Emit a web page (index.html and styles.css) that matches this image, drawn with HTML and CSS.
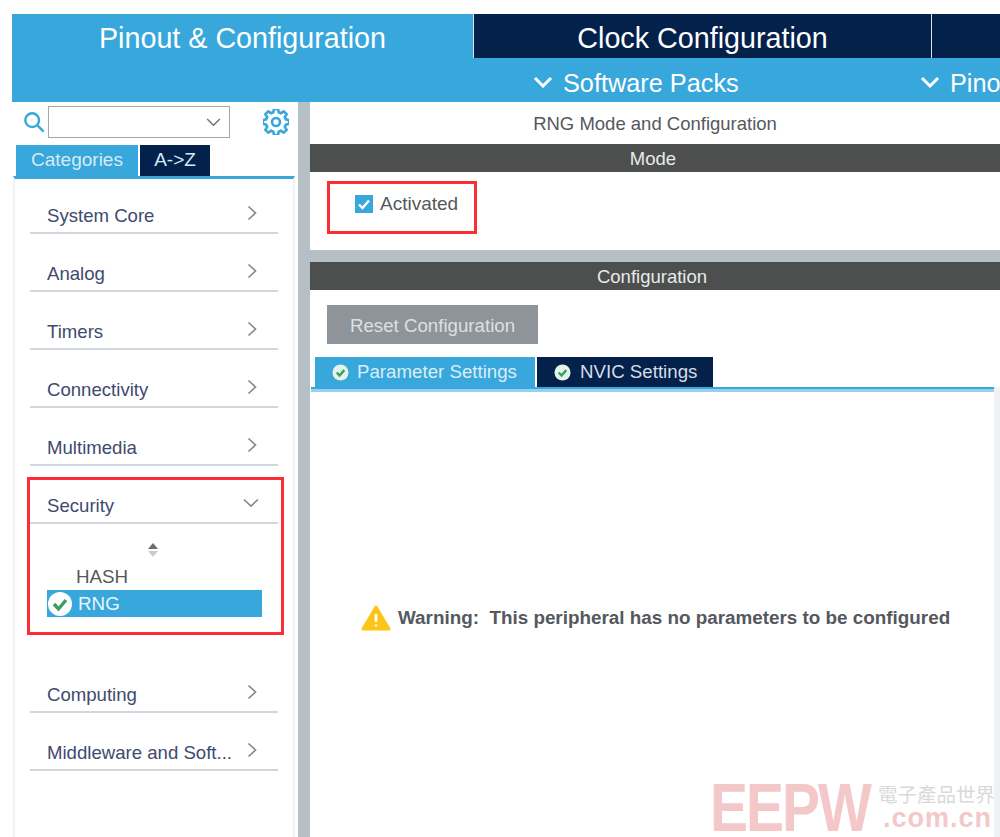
FILE: index.html
```html
<!DOCTYPE html>
<html lang="en">
<head>
<meta charset="utf-8">
<title>RNG Mode and Configuration</title>
<link rel="stylesheet" href="styles.css">
</head>
<body>
<div class="app">
  <header class="header">
    <nav class="main-tabs">
      <div class="main-tab active">Pinout &amp; Configuration</div>
      <div class="main-tab clock">Clock Configuration</div>
      <div class="main-tab rest"></div>
    </nav>
    <div class="subbar">
      <div class="sub-item packs"><svg class="sub-chev" viewBox="0 0 20 12"><path d="M2 2l8 8 8-8"/></svg>Software Packs</div>
      <div class="sub-item pinout"><svg class="sub-chev" viewBox="0 0 20 12"><path d="M2 2l8 8 8-8"/></svg>Pinout</div>
    </div>
  </header>
  <div class="workspace">
    <aside class="sidebar">
      <div class="search-row">
        <svg class="search-icon" viewBox="0 0 24 24"><circle cx="10" cy="10" r="7.5"/><path d="M15.5 15.5l7 7"/></svg>
        <div class="combo"><svg class="combo-chev" viewBox="0 0 16 10"><path d="M1 1l7 7 7-7"/></svg></div>
        <svg class="gear" viewBox="0 0 26 26"><path d="M11 1.5h4l.7 3.2 2.3 1 2.8-1.8 2.8 2.8-1.8 2.8 1 2.3 3.2.7v4l-3.2.7-1 2.3 1.8 2.8-2.8 2.8-2.8-1.8-2.3 1-.7 3.2h-4l-.7-3.2-2.3-1-2.8 1.8-2.8-2.8 1.8-2.8-1-2.3-3.2-.7v-4l3.2-.7 1-2.3-1.8-2.8 2.8-2.8 2.8 1.8 2.3-1z" transform="translate(0 -1.5)"/><circle cx="13" cy="13" r="4"/></svg>
      </div>
      <div class="side-tabs">
        <div class="side-tab on">Categories</div>
        <div class="side-tab off">A-&gt;Z</div>
      </div>
      <div class="cat-panel">
        <div class="cat-row first"><span>System Core</span><svg class="chev" viewBox="0 0 10 16"><path d="M1.5 1.5l7 6.5-7 6.5"/></svg></div>
        <div class="cat-row"><span>Analog</span><svg class="chev" viewBox="0 0 10 16"><path d="M1.5 1.5l7 6.5-7 6.5"/></svg></div>
        <div class="cat-row"><span>Timers</span><svg class="chev" viewBox="0 0 10 16"><path d="M1.5 1.5l7 6.5-7 6.5"/></svg></div>
        <div class="cat-row"><span>Connectivity</span><svg class="chev" viewBox="0 0 10 16"><path d="M1.5 1.5l7 6.5-7 6.5"/></svg></div>
        <div class="cat-row"><span>Multimedia</span><svg class="chev" viewBox="0 0 10 16"><path d="M1.5 1.5l7 6.5-7 6.5"/></svg></div>
        <div class="cat-group">
          <div class="cat-row"><span>Security</span><svg class="chev-down" viewBox="0 0 16 10"><path d="M1 1.5l7 6.5 7-6.5"/></svg></div>
          <div class="sort-mark"><svg viewBox="0 0 12 16"><path class="up" d="M6 1l5 6H1z"/><path class="down" d="M1 9h10l-5 6z"/></svg></div>
          <div class="ip-item">HASH</div>
          <div class="ip-item selected"><svg class="ok-big" viewBox="0 0 24 24"><circle cx="12" cy="12" r="12"/><path d="M6 12l4.5 5L18 8"/></svg>RNG</div>
          <div class="annot annot-security"></div>
        </div>
        <div class="cat-row computing"><span>Computing</span><svg class="chev" viewBox="0 0 10 16"><path d="M1.5 1.5l7 6.5-7 6.5"/></svg></div>
        <div class="cat-row"><span>Middleware and Soft...</span><svg class="chev" viewBox="0 0 10 16"><path d="M1.5 1.5l7 6.5-7 6.5"/></svg></div>
      </div>
    </aside>
    <div class="splitter"></div>
    <main class="content">
      <section class="mode">
        <div class="title">RNG Mode and Configuration</div>
        <div class="band band-mode">Mode</div>
        <div class="mode-body">
          <label class="check"><svg class="checkbox" viewBox="0 0 18 18"><rect width="18" height="18"/><path d="M4 9.5l3.5 3.5L14 5.5"/></svg>Activated</label>
          <div class="annot annot-mode"></div>
        </div>
      </section>
      <section class="config">
        <div class="band band-config">Configuration</div>
        <div class="reset">Reset Configuration</div>
        <div class="cfg-tabs">
          <div class="cfg-tab on"><svg class="ok" viewBox="0 0 18 18"><circle cx="9" cy="9" r="8.5"/><path d="M5 9l3 3.2L13 6.5"/></svg>Parameter Settings</div>
          <div class="cfg-tab off"><svg class="ok" viewBox="0 0 18 18"><circle cx="9" cy="9" r="8.5"/><path d="M5 9l3 3.2L13 6.5"/></svg>NVIC Settings</div>
        </div>
        <div class="cfg-body">
          <div class="cfg-line"></div>
          <div class="warning">
            <svg class="warn-icon" viewBox="0 0 30 26"><path class="tri" d="M15 2L28 24H2z"/><path class="bang" d="M15 9v8M15 19.5v2"/></svg>
            <span>Warning:&nbsp; This peripheral has no parameters to be configured</span>
          </div>
        </div>
      </section>
    </main>
  </div>
  <div class="watermark">
    <span class="wm-logo">EEPW</span>
    <div class="wm-side">
      <span class="wm-cn">電子產品世界</span>
      <span class="wm-com">.com.cn</span>
    </div>
  </div>
</div>
</body>
</html>
```
FILE: styles.css
```css
* { box-sizing: border-box; }
html, body { margin: 0; height: 100%; background: #fff; overflow: hidden; }
body { font-family: "Liberation Sans", Arial, sans-serif; color: #4d4f55; }
.app { position: relative; width: 1000px; height: 837px; padding: 14px 0 0 12px; display: flex; flex-direction: column; overflow: hidden; }

.header { height: 88px; background: #38a7db; flex: none; }
.main-tabs { display: flex; height: 44px; }
.main-tab { font-size: 28.7px; color: #fff; text-align: center; line-height: 48px; white-space: nowrap; }
.main-tab.active { width: 461px; }
.main-tab.clock { width: 459px; background: #03214a; border-left: 1px solid #d7e3ea; border-right: 1px solid #d7e3ea; }
.main-tab.rest { flex: 1; background: #03214a; }
.subbar { height: 44px; display: flex; color: #fff; font-size: 25.3px; }
.sub-item { display: flex; align-items: center; gap: 10px; height: 50px; white-space: nowrap; flex: none; }
.packs { margin-left: 521px; width: 387px; }
.sub-chev { width: 20px; height: 12px; fill: none; stroke: #fff; stroke-width: 3; margin-top: -2px; }

.workspace { flex: 1; display: flex; min-height: 0; }
.sidebar { width: 286px; flex: none; display: flex; flex-direction: column; }
.search-row { height: 43px; display: flex; align-items: center; padding: 0 0 3px 11px; flex: none; }
.search-icon { width: 22px; height: 22px; fill: none; stroke: #38a7db; stroke-width: 2.6; flex: none; }
.combo { width: 182px; height: 32px; margin-left: 3px; border: 1px solid #a4a8ab; display: flex; align-items: center; justify-content: flex-end; padding-right: 8px; flex: none; }
.combo-chev { width: 15px; height: 9px; fill: none; stroke: #6c7075; stroke-width: 1.5; }
.gear { width: 26px; height: 26px; margin-left: 33px; fill: none; stroke: #38a7db; stroke-width: 2.6; flex: none; }
.side-tabs { display: flex; height: 31px; padding-left: 4px; flex: none; }
.side-tab { font-size: 19px; color: #d6ebf7; text-align: center; line-height: 30px; }
.side-tab.on { width: 122px; background: #38a7db; }
.side-tab.off { width: 70px; margin-left: 2px; background: #03214a; }
.cat-panel { flex: 1; margin: 0 3px 0 1px; border-top: 3px solid #38a7db; border-left: 2px solid #f0f2f5; border-right: 2px solid #f0f2f5; padding: 0 15px; }
.cat-row { height: 58px; border-bottom: 2px solid #d0d6de; display: flex; align-items: flex-end; justify-content: space-between; padding: 0 21px 4px 17px; font-size: 18.6px; color: #3e4a6e; line-height: 24px; }
.cat-row.first { height: 55px; }
.chev { width: 10px; height: 16px; fill: none; stroke: #85898d; stroke-width: 1.7; margin-bottom: 7px; }
.chev-down { width: 16px; height: 10px; fill: none; stroke: #85898d; stroke-width: 1.7; margin: 0 -2px 10px 0; }
.cat-group { position: relative; height: 169px; }
.sort-mark { height: 39px; display: flex; justify-content: center; align-items: flex-end; }
.sort-mark svg { width: 12px; height: 16px; margin-right: 3px; margin-bottom: 5px; }
.sort-mark .up { fill: #6a6e72; }
.sort-mark .down { fill: #c9cccf; }
.ip-item { height: 27px; line-height: 28px; padding-left: 46px; font-size: 18.8px; color: #55595e; }
.ip-item.selected { background: #38a7db; color: #eaf6fc; margin: 0 16px 0 17px; padding-left: 31px; display: flex; align-items: center; position: relative; }
.ok-big { position: absolute; left: 1px; top: 2px; width: 24px; height: 24px; }
.ok-big circle { fill: #fff; }
.ok-big path { fill: none; stroke: #3b9e63; stroke-width: 3.4; }
.computing { height: 78px; }

.annot { position: absolute; border: 3px solid #fb2e36; pointer-events: none; }
.annot-security { left: -3px; top: 11px; width: 257px; height: 158px; }
.annot-mode { left: 17px; top: 9px; width: 150px; height: 53px; }

.splitter { width: 12px; flex: none; background: #b4c0c6; }
.content { flex: 1; min-width: 0; display: flex; flex-direction: column; background: #b4c0c6; gap: 12px; }
.mode { background: #fff; height: 148px; flex: none; }
.title { height: 42px; font-size: 18.5px; line-height: 44px; text-align: center; color: #55585d; }
.band { height: 28px; background: #4d4f4e; color: #e8eaea; font-size: 18.5px; text-align: center; line-height: 30px; }
.band-mode { padding-right: 4px; }
.mode-body { position: relative; height: 78px; }
.check { position: absolute; left: 45px; top: 21px; display: flex; align-items: center; gap: 7px; font-size: 19px; color: #55585d; line-height: 22px; }
.checkbox { width: 18px; height: 18px; }
.checkbox rect { fill: #38a7db; }
.checkbox path { fill: none; stroke: #fff; stroke-width: 2.4; }
.config { flex: 1; background: #fff; display: flex; flex-direction: column; }
.band-config { padding-right: 6px; }
.reset { margin: 15px 0 0 17px; width: 211px; height: 39px; background: #8e9499; color: #dde0e2; font-size: 18.7px; line-height: 41px; text-align: center; }
.cfg-tabs { display: flex; margin: 13px 0 0 5px; height: 30px; }
.cfg-tab { font-size: 18.7px; display: flex; align-items: center; color: #d8eef9; padding-left: 17px; gap: 8px; white-space: nowrap; }
.cfg-tab.on { width: 220px; background: #38a7db; }
.cfg-tab.off { width: 176px; margin-left: 2px; background: #03214a; padding-left: 17px; gap: 9px; color: #d6dde6; }
.ok { width: 17px; height: 17px; flex: none; }
.ok circle { fill: #e2f3e9; }
.ok path { fill: none; stroke: #3b9e63; stroke-width: 2.6; }
.cfg-body { flex: 1; margin-left: 1px; border-right: 6px solid #f0f1f3; }
.cfg-line { height: 5px; border-top: 2px solid #38a7db; background: #96d2ef; }
.warning { display: flex; align-items: center; margin: 213px 0 0 50px; font-size: 18.85px; font-weight: 700; color: #55585e; gap: 7px; white-space: nowrap; }
.warn-icon { width: 30px; height: 26px; flex: none; }
.warn-icon .tri { fill: #fcc419; stroke: #fcc419; stroke-width: 3; stroke-linejoin: round; }
.warn-icon .bang { fill: none; stroke: #fff; stroke-width: 2.6; }

.watermark { position: absolute; left: 710px; top: 782px; height: 50px; display: flex; align-items: flex-start; gap: 5px; }
.wm-logo { width: 162px; flex: none; font-size: 57px; font-weight: 700; color: #f4c8c8; line-height: 50px; height: 50px; letter-spacing: -2px; transform: scaleY(1.2); transform-origin: center; white-space: nowrap; }
.wm-side { display: flex; flex-direction: column; align-items: flex-end; width: 118px; flex: none; white-space: nowrap; }
.wm-cn { font-family: "Noto Sans CJK TC", "Noto Sans CJK SC", serif; font-size: 19.5px; color: #d9d9d9; line-height: 24px; }
.wm-com { font-size: 27px; font-weight: 700; color: #f4c8c8; margin-right: 3px; letter-spacing: 1px; line-height: 24px; }
```
